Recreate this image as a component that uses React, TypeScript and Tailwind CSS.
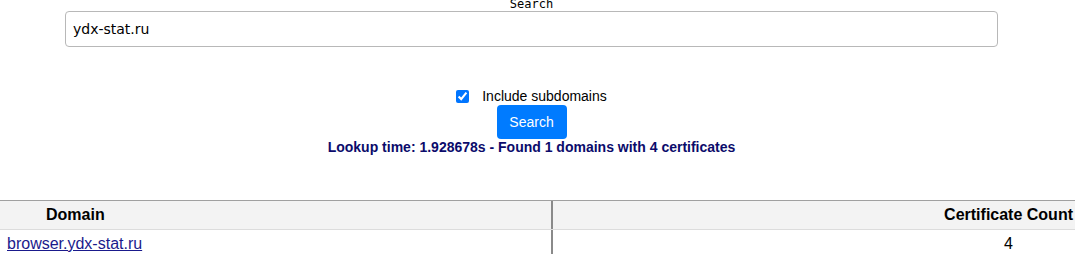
import React from "react";

export default function App() {
  return (
    <div className="w-[1075px] h-[254px] overflow-hidden bg-white font-['Liberation_Sans',Arial,sans-serif] text-black">
      <div className="w-[1063px] flex flex-col items-center">
        <div className="mt-[-3px] h-[14px] leading-[14px] text-[12px] font-['DejaVu_Sans_Mono',monospace] text-black">
          Search
        </div>
        <input
          readOnly
          value="ydx-stat.ru"
          className="mt-0 w-[933px] h-[36px] border border-[#b8b8b8] rounded-[4px] px-[7px] text-[14px] font-['DejaVu_Sans',sans-serif] text-black outline-none"
        />
        <label className="mt-[40px] flex items-center h-[18px] text-[14px]">
          <input type="checkbox" checked readOnly className="w-[13px] h-[13px] m-0 mr-[13px] accent-[#0075ff]" />
          <span>Include subdomains</span>
        </label>
        <button className="mt-0 w-[70px] h-[34px] rounded-[4px] bg-[#007bff] text-white text-[14px]">
          Search
        </button>
        <div className="mt-0 h-[16px] leading-[16px] text-[14px] font-bold text-[#0b0b6b]">
          Lookup time: 1.928678s - Found 1 domains with 4 certificates
        </div>
      </div>
      <div className="mt-[45px] w-[1075px] border-t border-[#a0a0a0]">
        <div className="flex h-[29px] bg-[#f3f3f3] border-b border-[#dcdcdc]">
          <div className="w-[551px] pl-[46px] flex items-center font-bold text-[16px]">Domain</div>
          <div className="w-[2px] bg-[#8a8a8a]" />
          <div className="flex-1 pr-[2px] flex items-center justify-end font-bold text-[16px]">Certificate Count</div>
        </div>
        <div className="flex h-[28px]">
          <div className="w-[551px] pl-[7px] flex items-center text-[16px]">
            <a href="#" className="underline text-[#1a1a8c]">browser.ydx-stat.ru</a>
          </div>
          <div className="w-[2px] bg-[#8a8a8a]" />
          <div className="flex-1 pr-[62px] flex items-center justify-end text-[16px]">4</div>
        </div>
      </div>
    </div>
  );
}
